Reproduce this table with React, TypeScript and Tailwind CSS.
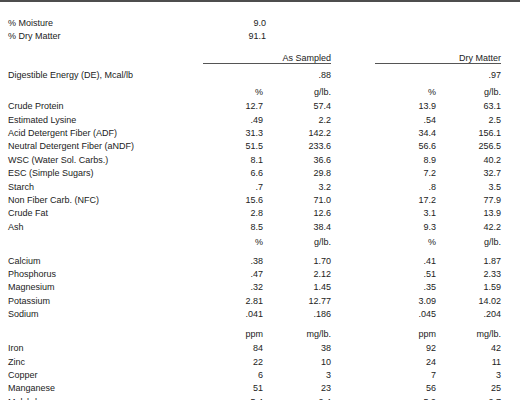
import React from "react";

type Row = [string, string, string, string, string];

const proximate: Row[] = [
  ["Crude Protein", "12.7", "57.4", "13.9", "63.1"],
  ["Estimated Lysine", ".49", "2.2", ".54", "2.5"],
  ["Acid Detergent Fiber (ADF)", "31.3", "142.2", "34.4", "156.1"],
  ["Neutral Detergent Fiber (aNDF)", "51.5", "233.6", "56.6", "256.5"],
  ["WSC (Water Sol. Carbs.)", "8.1", "36.6", "8.9", "40.2"],
  ["ESC (Simple Sugars)", "6.6", "29.8", "7.2", "32.7"],
  ["Starch", ".7", "3.2", ".8", "3.5"],
  ["Non Fiber Carb. (NFC)", "15.6", "71.0", "17.2", "77.9"],
  ["Crude Fat", "2.8", "12.6", "3.1", "13.9"],
  ["Ash", "8.5", "38.4", "9.3", "42.2"],
];

const minerals: Row[] = [
  ["Calcium", ".38", "1.70", ".41", "1.87"],
  ["Phosphorus", ".47", "2.12", ".51", "2.33"],
  ["Magnesium", ".32", "1.45", ".35", "1.59"],
  ["Potassium", "2.81", "12.77", "3.09", "14.02"],
  ["Sodium", ".041", ".186", ".045", ".204"],
];

const traces: Row[] = [
  ["Iron", "84", "38", "92", "42"],
  ["Zinc", "22", "10", "24", "11"],
  ["Copper", "6", "3", "7", "3"],
  ["Manganese", "51", "23", "56", "25"],
  ["Molybdenum", "5.4", "2.4", "5.9", "2.7"],
];

// label | % | g/lb | gap | % | g/lb
const grid = "grid grid-cols-[195px_60px_68px_44px_61px_65px] pl-[8px]";

function DataRow({ row, className = "" }: { row: Row; className?: string }) {
  return (
    <div className={`${grid} h-[13.4px] leading-[13.4px] ${className}`}>
      <div>{row[0]}</div>
      <div className="text-right">{row[1]}</div>
      <div className="text-right">{row[2]}</div>
      <div />
      <div className="text-right">{row[3]}</div>
      <div className="text-right">{row[4]}</div>
    </div>
  );
}

function UnitRow({ a, b, className = "" }: { a: string; b: string; className?: string }) {
  return <DataRow row={["", a, b, a, b]} className={className} />;
}

export default function App() {
  return (
    <div className="w-[520px] h-[400px] overflow-hidden bg-white border-t-2 border-[#4d4d4d] font-['Liberation_Sans',Arial,sans-serif] text-[9px] text-[#222]">
      {/* moisture / dry matter */}
      <div className="mt-[15px]">
        {[
          ["% Moisture", "9.0"],
          ["% Dry Matter", "91.1"],
        ].map(([label, value]) => (
          <div key={label} className="flex h-[13.4px] leading-[13.4px] pl-[8px]">
            <div className="w-[198px]">{label}</div>
            <div className="w-[60px] text-right">{value}</div>
          </div>
        ))}
      </div>

      {/* column headings */}
      <div className={`${grid} mt-[9px] leading-[10px]`}>
        <div />
        <div className="col-span-2 text-right border-b-[1.5px] border-[#555] pb-[0.5px]">As Sampled</div>
        <div />
        <div className="col-span-2 text-right border-b-[1.5px] border-[#555] pb-[0.5px]">Dry Matter</div>
      </div>

      <div className={`${grid} mt-[4.5px] h-[13.4px] leading-[13.4px]`}>
        <div>Digestible Energy (DE), Mcal/lb</div>
        <div />
        <div className="text-right">.88</div>
        <div />
        <div />
        <div className="text-right">.97</div>
      </div>

      <UnitRow a="%" b="g/lb." className="mt-[4.1px]" />
      <div className="mt-[0.6px]">
        {proximate.map((r) => (
          <DataRow key={r[0]} row={r} />
        ))}
      </div>

      <UnitRow a="%" b="g/lb." className="mt-[1.5px]" />
      <div className="mt-[5.6px]">
        {minerals.map((r) => (
          <DataRow key={r[0]} row={r} />
        ))}
      </div>

      <UnitRow a="ppm" b="mg/lb." className="mt-[6.5px]" />
      <div className="mt-[0.8px]">
        {traces.map((r) => (
          <DataRow key={r[0]} row={r} />
        ))}
      </div>
    </div>
  );
}
